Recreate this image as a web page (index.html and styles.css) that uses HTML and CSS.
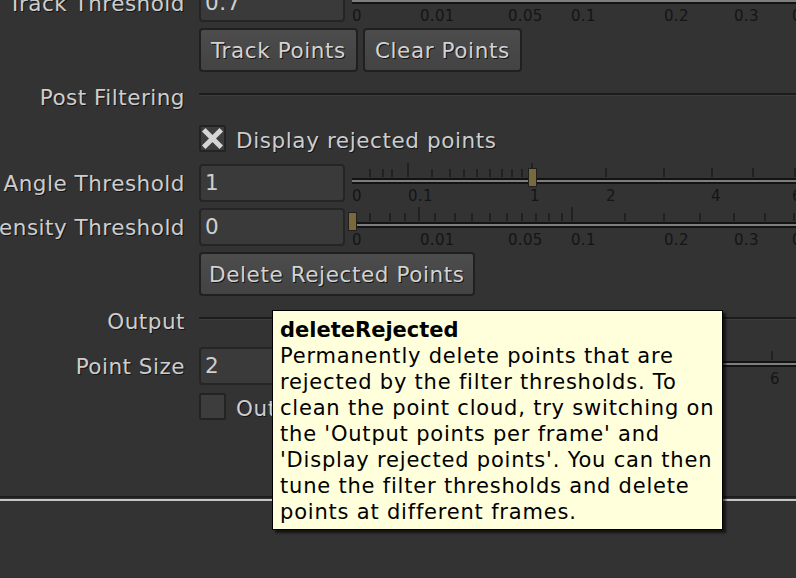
FILE: index.html
```html
<!DOCTYPE html>
<html>
<head>
<meta charset="utf-8">
<title>Point Cloud</title>
<link rel="stylesheet" href="styles.css">
</head>
<body>
<div class="panel">
  <div class="form">
    <div class="row">
      <div class="lbl"><span>Track Threshold</span></div>
      <div class="field">
        <div class="input">0.7</div>
        <svg class="slider" width="460" height="38" viewBox="0 0 460 38">
          <g class="tk">
            <line x1="22" y1="5" x2="22" y2="13"/><line x1="42" y1="5" x2="42" y2="13"/><line x1="57" y1="5" x2="57" y2="13"/><line x1="71" y1="-1" x2="71" y2="13"/><line x1="87" y1="5" x2="87" y2="13"/><line x1="107" y1="5" x2="107" y2="13"/><line x1="124" y1="5" x2="124" y2="13"/><line x1="142" y1="5" x2="142" y2="13"/><line x1="159" y1="5" x2="159" y2="13"/><line x1="174" y1="5" x2="174" y2="13"/><line x1="188" y1="5" x2="188" y2="13"/><line x1="201" y1="5" x2="201" y2="13"/><line x1="214" y1="5" x2="214" y2="13"/><line x1="224" y1="-1" x2="224" y2="13"/><line x1="277" y1="5" x2="277" y2="13"/><line x1="316" y1="5" x2="316" y2="13"/><line x1="352" y1="5" x2="352" y2="13"/><line x1="386" y1="5" x2="386" y2="13"/><line x1="417" y1="5" x2="417" y2="13"/><line x1="446" y1="5" x2="446" y2="13"/>
          </g>
          <rect class="trk" x="4" y="14" width="456" height="2"/>
          <rect class="trk-mid" x="4" y="16" width="456" height="2"/>
          <rect class="trk" x="4" y="18" width="456" height="2"/>
          <text class="tl" x="4" y="37">0</text><text class="tl" x="72" y="37">0.01</text><text class="tl" x="160" y="37">0.05</text><text class="tl" x="223" y="37">0.1</text><text class="tl" x="316" y="37">0.2</text><text class="tl" x="386" y="37">0.3</text><text class="tl" x="444" y="37">0.4</text>
        </svg>
      </div>
    </div>

    <div class="row btns">
      <div class="lbl"></div>
      <div class="field">
        <button class="btn">Track Points</button>
        <button class="btn">Clear Points</button>
      </div>
    </div>

    <div class="row head">
      <div class="lbl"><span>Post Filtering</span></div>
      <div class="sep"></div>
    </div>

    <div class="row check">
      <div class="lbl"></div>
      <div class="field">
        <span class="box"><svg width="23" height="23" viewBox="0 0 23 23"><path class="xmark" d="M4.5 4.5 L18.5 18.5 M18.5 4.5 L4.5 18.5"/></svg></span>
        <span class="cbtext">Display rejected points</span>
      </div>
    </div>

    <div class="row">
      <div class="lbl"><span>Angle Threshold</span></div>
      <div class="field">
        <div class="input">1</div>
        <svg class="slider" width="460" height="38" viewBox="0 0 460 38">
          <g class="tk">
            <line x1="22" y1="5" x2="22" y2="13"/><line x1="35" y1="5" x2="35" y2="13"/><line x1="44" y1="5" x2="44" y2="13"/><line x1="60" y1="-1" x2="60" y2="13"/><line x1="84" y1="5" x2="84" y2="13"/><line x1="102" y1="5" x2="102" y2="13"/><line x1="116" y1="5" x2="116" y2="13"/><line x1="129" y1="5" x2="129" y2="13"/><line x1="142" y1="5" x2="142" y2="13"/><line x1="154" y1="5" x2="154" y2="13"/><line x1="164" y1="5" x2="164" y2="13"/><line x1="174" y1="5" x2="174" y2="13"/><line x1="184" y1="-1" x2="184" y2="13"/><line x1="258" y1="4" x2="258" y2="13"/><line x1="316" y1="4" x2="316" y2="13"/><line x1="364" y1="4" x2="364" y2="13"/><line x1="405" y1="4" x2="405" y2="13"/><line x1="447" y1="4" x2="447" y2="13"/>
          </g>
          <rect class="trk" x="4" y="14" width="456" height="2"/>
          <rect class="trk-mid" x="4" y="16" width="456" height="2"/>
          <rect class="trk" x="4" y="18" width="456" height="2"/>
          <text class="tl" x="4" y="37">0</text><text class="tl" x="60" y="37">0.1</text><text class="tl" x="182" y="37">1</text><text class="tl" x="258" y="37">2</text><text class="tl" x="363" y="37">4</text><text class="tl" x="444" y="37">6</text>
          <rect class="handle" x="180.5" y="4.5" width="8" height="18"/>
        </svg>
      </div>
    </div>

    <div class="row">
      <div class="lbl"><span>Density Threshold</span></div>
      <div class="field">
        <div class="input">0</div>
        <svg class="slider" width="460" height="38" viewBox="0 0 460 38">
          <g class="tk">
            <line x1="22" y1="5" x2="22" y2="13"/><line x1="42" y1="5" x2="42" y2="13"/><line x1="57" y1="5" x2="57" y2="13"/><line x1="71" y1="-1" x2="71" y2="13"/><line x1="87" y1="5" x2="87" y2="13"/><line x1="107" y1="5" x2="107" y2="13"/><line x1="124" y1="5" x2="124" y2="13"/><line x1="142" y1="5" x2="142" y2="13"/><line x1="159" y1="5" x2="159" y2="13"/><line x1="174" y1="5" x2="174" y2="13"/><line x1="188" y1="5" x2="188" y2="13"/><line x1="201" y1="5" x2="201" y2="13"/><line x1="214" y1="5" x2="214" y2="13"/><line x1="224" y1="-1" x2="224" y2="13"/><line x1="277" y1="5" x2="277" y2="13"/><line x1="316" y1="5" x2="316" y2="13"/><line x1="352" y1="5" x2="352" y2="13"/><line x1="386" y1="5" x2="386" y2="13"/><line x1="417" y1="5" x2="417" y2="13"/><line x1="446" y1="5" x2="446" y2="13"/>
          </g>
          <rect class="trk" x="4" y="14" width="456" height="2"/>
          <rect class="trk-mid" x="4" y="16" width="456" height="2"/>
          <rect class="trk" x="4" y="18" width="456" height="2"/>
          <text class="tl" x="4" y="37">0</text><text class="tl" x="72" y="37">0.01</text><text class="tl" x="160" y="37">0.05</text><text class="tl" x="223" y="37">0.1</text><text class="tl" x="316" y="37">0.2</text><text class="tl" x="386" y="37">0.3</text><text class="tl" x="444" y="37">0.4</text>
          <rect class="handle" x="0.5" y="4.5" width="8" height="18"/>
        </svg>
      </div>
    </div>

    <div class="row btns">
      <div class="lbl"></div>
      <div class="field">
        <button class="btn wide">Delete Rejected Points</button>
      </div>
    </div>

    <div class="row head">
      <div class="lbl"><span>Output</span></div>
      <div class="sep"></div>
    </div>

    <div class="row">
      <div class="lbl"><span>Point Size</span></div>
      <div class="field">
        <div class="input">2</div>
        <svg class="slider" width="460" height="38" viewBox="0 0 460 38">
          <g class="tk">
            <line x1="74" y1="4" x2="74" y2="13"/><line x1="144" y1="4" x2="144" y2="13"/><line x1="214" y1="4" x2="214" y2="13"/><line x1="284" y1="4" x2="284" y2="13"/><line x1="354" y1="4" x2="354" y2="13"/><line x1="424" y1="4" x2="424" y2="13"/>
          </g>
          <rect class="trk" x="4" y="14" width="456" height="2"/>
          <rect class="trk-mid" x="4" y="16" width="456" height="2"/>
          <rect class="trk" x="4" y="18" width="456" height="2"/>
          <text class="tl" x="422" y="37">6</text>
        </svg>
      </div>
    </div>

    <div class="row check">
      <div class="lbl"></div>
      <div class="field">
        <span class="box"></span>
        <span class="cbtext">Output points per frame</span>
      </div>
    </div>
  </div>
</div>
<div class="footer"></div>

<div class="tooltip"><span class="tt-title">deleteRejected</span><br>Permanently delete points that are<br>rejected by the filter thresholds. To<br>clean the point cloud, try switching on<br>the 'Output points per frame' and<br>'Display rejected points'. You can then<br>tune the filter thresholds and delete<br>points at different frames.</div>
</body>
</html>
```

FILE: styles.css
```css
html, body {
  margin: 0;
  padding: 0;
}

body {
  width: 796px;
  height: 578px;
  overflow: hidden;
  background: #333333;
  font-family: "DejaVu Sans", Verdana, sans-serif;
}

.panel {
  height: 496px;
  overflow: hidden;
  border-bottom: 2px solid #1d1d1d;
}

.footer {
  margin-top: 1px;
  border-top: 2px solid #c6c6c6;
}

.form {
  margin-top: -16px;
  display: flex;
  flex-direction: column;
  gap: 6px;
}

.row {
  display: flex;
  align-items: center;
  height: 38px;
}

.row.btns {
  height: 44px;
}

.row.head {
  height: 39px;
}

.row.check {
  height: 35px;
}

.lbl {
  width: 185px;
  flex: none;
  margin-right: 14px;
  display: flex;
  justify-content: flex-end;
  white-space: nowrap;
  font-size: 21.5px;
  letter-spacing: 0.5px;
  color: #cdcdcd;
  text-shadow: 1px 1px 0 #141414;
}

.field {
  display: flex;
  align-items: center;
  flex: none;
  height: 100%;
}

.input {
  width: 146px;
  height: 38px;
  box-sizing: border-box;
  border: 2px solid #252525;
  border-radius: 4px;
  background: #3a3a3a;
  padding-left: 4px;
  font-size: 21.5px;
  line-height: 34px;
  letter-spacing: 0.6px;
  color: #cfcfcf;
  flex: none;
}

.slider {
  margin-left: 3px;
  align-self: flex-start;
  overflow: visible;
  flex: none;
}

.tk line {
  stroke: #1c1c1c;
  stroke-width: 1.5;
}

.trk {
  fill: #131313;
}

.trk-mid {
  fill: #7e7e7e;
}

.tl {
  font-family: "DejaVu Sans", Verdana, sans-serif;
  font-size: 15px;
  letter-spacing: 0.3px;
  fill: #151515;
}

.handle {
  fill: #7b6a39;
  stroke: #1f1f1f;
  stroke-width: 1;
}

.btn {
  height: 44px;
  box-sizing: border-box;
  margin: 0 5px 0 0;
  padding: 0 10px;
  border: 2px solid #202020;
  border-radius: 4px;
  background: linear-gradient(#4c4c4c, #434343);
  color: #d2d2d2;
  font-family: "DejaVu Sans", Verdana, sans-serif;
  font-size: 21.5px;
  letter-spacing: 0.6px;
  text-shadow: 1px 1px 0 #151515;
  white-space: nowrap;
}

.btn.wide {
  padding: 0 8px;
}

.sep {
  flex: 1;
  align-self: flex-start;
  margin-top: 15px;
  height: 0;
  border-top: 2px solid #1c1c1c;
  border-bottom: 1px solid #3d3d3d;
}

.box {
  width: 27px;
  height: 27px;
  box-sizing: border-box;
  border: 2px solid #232323;
  border-radius: 2px;
  background: #3d3d3d;
  align-self: flex-start;
  margin-top: 2px;
  flex: none;
  display: block;
}

.box svg {
  display: block;
}

.xmark {
  stroke: #d6d6d6;
  stroke-width: 5;
  stroke-linecap: square;
  fill: none;
}

.cbtext {
  margin-left: 10px;
  font-size: 21.5px;
  letter-spacing: 0.6px;
  color: #cdcdcd;
  text-shadow: 1px 1px 0 #141414;
  white-space: nowrap;
}

.tooltip {
  position: absolute;
  left: 272px;
  top: 310px;
  width: 451px;
  box-sizing: border-box;
  padding: 6px 7px 4px 7px;
  border: 1px solid #000;
  background: #ffffdc;
  color: #000;
  font-size: 21px;
  line-height: 26px;
  letter-spacing: 0.8px;
  white-space: nowrap;
  box-shadow: 3px 3px 2px rgba(0, 0, 0, 0.6);
}

.tt-title {
  font-weight: bold;
  letter-spacing: 0;
}
```
